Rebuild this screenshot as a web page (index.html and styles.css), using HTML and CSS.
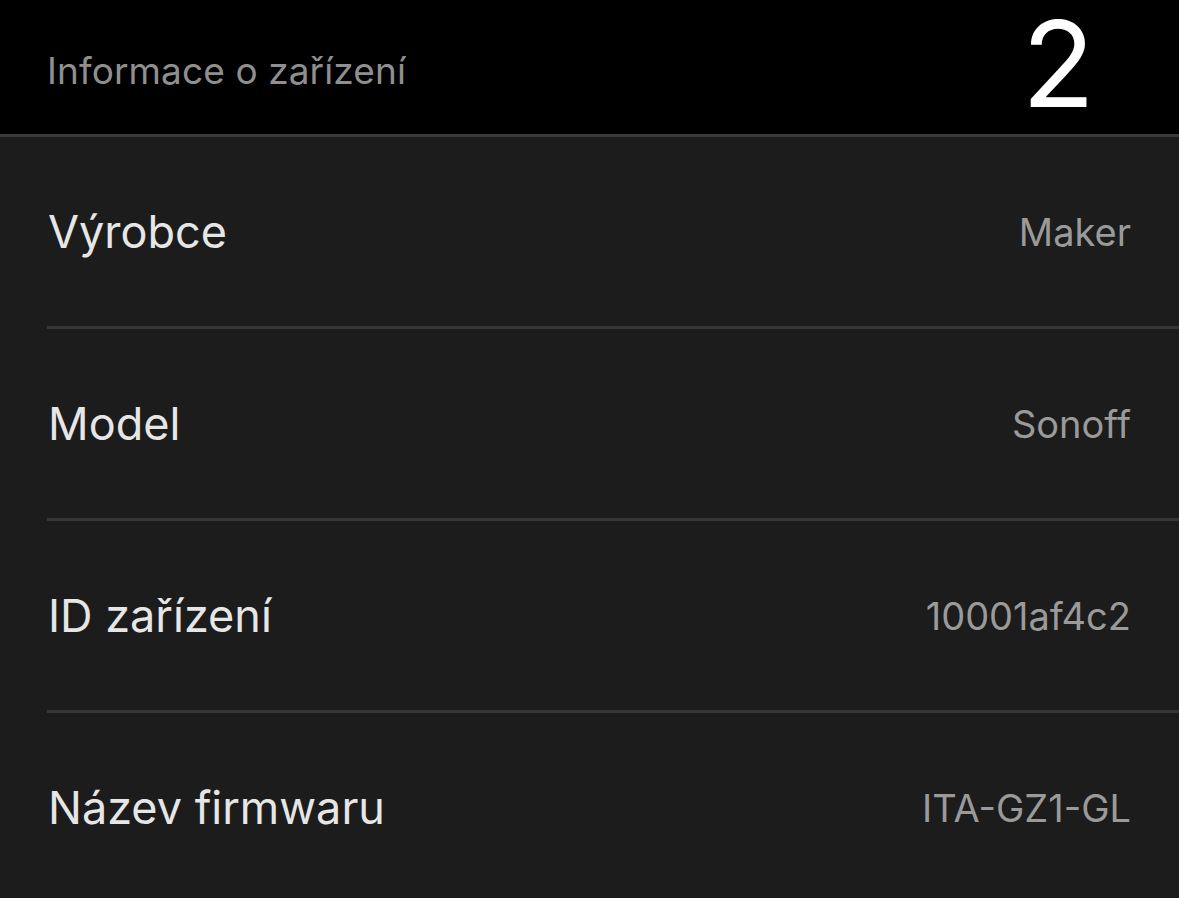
FILE: index.html
```html
<!DOCTYPE html>
<html lang="cs">
<head>
<meta charset="utf-8">
<title>Informace o zařízení</title>
<link rel="stylesheet" href="styles.css">
</head>
<body>
<header class="section-header">
  <span class="section-title">Informace o zařízení</span>
  <span class="section-count">2</span>
</header>
<ul class="info-list">
  <li class="info-row"><div class="info-inner"><span class="info-label">Výrobce</span><span class="info-value">Maker</span></div></li>
  <li class="info-row"><div class="info-inner"><span class="info-label">Model</span><span class="info-value">Sonoff</span></div></li>
  <li class="info-row"><div class="info-inner"><span class="info-label">ID zařízení</span><span class="info-value">10001af4c2</span></div></li>
  <li class="info-row"><div class="info-inner"><span class="info-label">Název firmwaru</span><span class="info-value">ITA-GZ1-GL</span></div></li>
</ul>
</body>
</html>
```

FILE: styles.css
```css
* { box-sizing: border-box; }
html, body {
  margin: 0;
  padding: 0;
  background: #1c1c1c;
  font-family: "Inter", "Roboto", "Liberation Sans", sans-serif;
  overflow: hidden;
}
.section-header {
  height: 137px;
  background: #000;
  border-bottom: 3px solid #3a3a3a;
  display: flex;
  align-items: center;
  justify-content: space-between;
  padding: 0 84px 0 47px;
}
.section-title {
  color: #8f8f8f;
  font-size: 37px;
  letter-spacing: 0.1px;
  margin-top: 6px;
}
.section-count {
  color: #fff;
  font-size: 120px;
  font-weight: 400;
  line-height: 1.06;
  margin-bottom: 6px;
}
.info-list {
  list-style: none;
  margin: 0;
  padding: 0;
}
.info-row {
  padding-left: 47px;
}
.info-inner {
  height: 192px;
  border-bottom: 3px solid #363636;
  display: flex;
  align-items: center;
  justify-content: space-between;
  padding: 0 48px 0 1px;
}
.info-label {
  color: #e6e6e6;
  font-size: 45px;
}
.info-value {
  color: #9a9a9a;
  font-size: 38px;
}
```
